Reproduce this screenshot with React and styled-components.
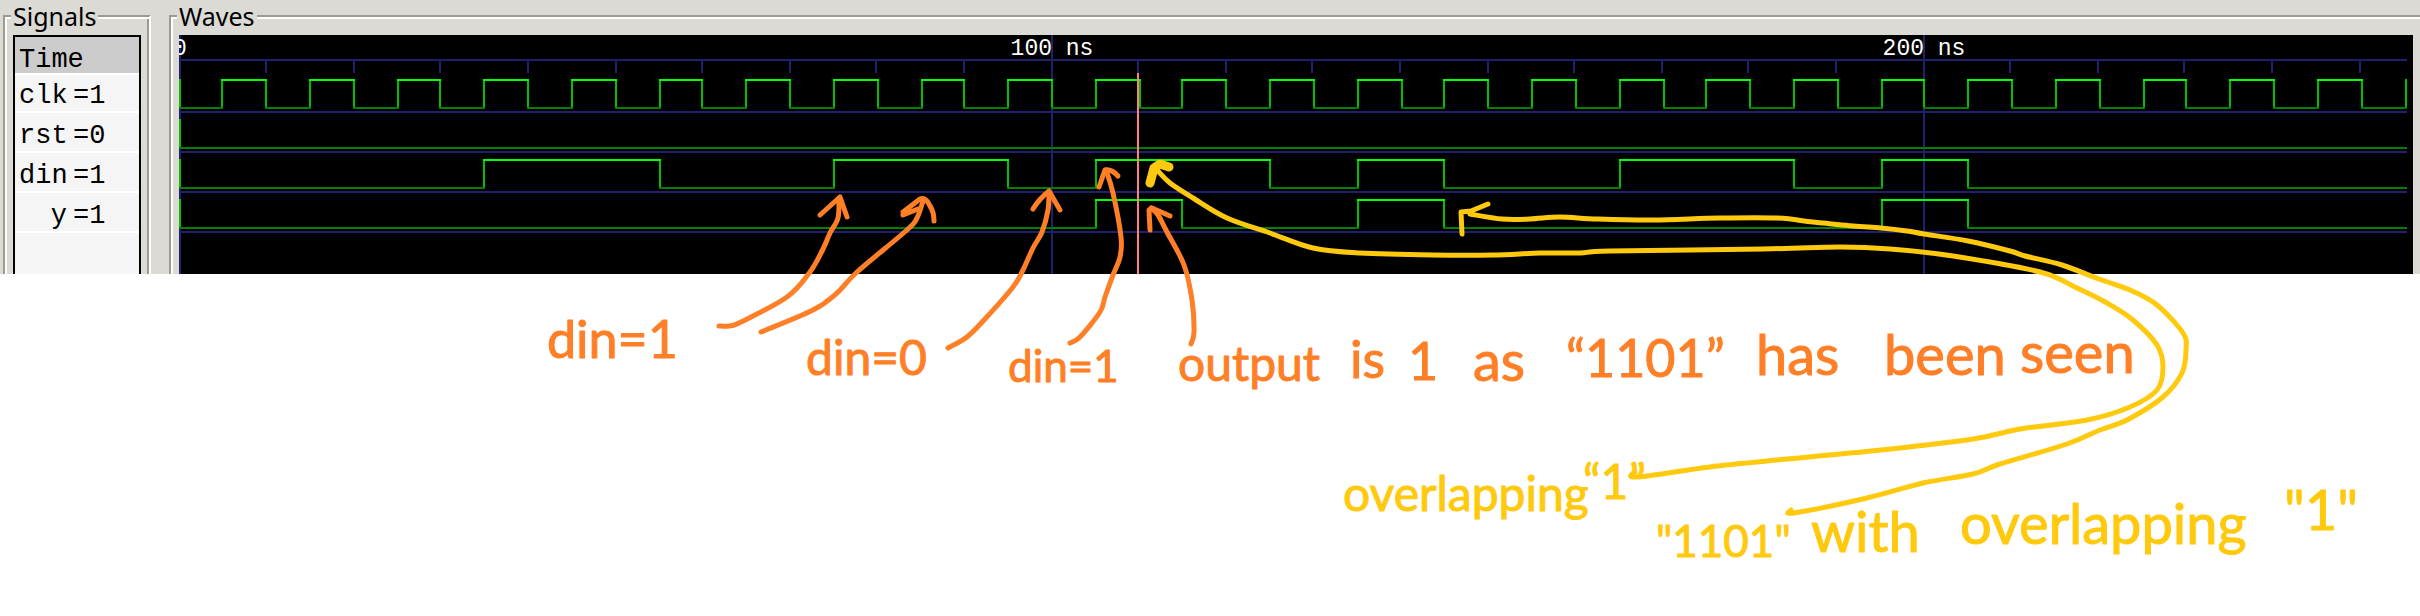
import React from "react";
import styled, { createGlobalStyle } from "styled-components";

const GlobalStyle = createGlobalStyle`
  * { box-sizing: border-box; }
  body { margin: 0; background: #ffffff; }
`;

const Page = styled.main`
  position: relative;
  min-height: 100vh;
  overflow: hidden;
  background: #ffffff;
`;

const Viewer = styled.div`
  display: flex;
  gap: 18px;
  padding-left: 3px;
  background: #dcdad5;
`;

const Group = styled.fieldset`
  flex: ${(p) => (p.$grow ? "1 1 0" : "0 0 auto")};
  min-width: 0;
  margin: 0;
  padding: 3px ${(p) => (p.$grow ? 7 : 8)}px 0 8px;
  border: 0 solid #9e9a91;
  border-top-width: 2px;
  border-left-width: 2px;
  border-right: ${(p) => (p.$grow ? "0" : "2px solid #ffffff")};
  box-shadow: inset 2px 2px 0 #ffffff${(p) => (p.$grow ? "" : ", inset -2px 0 0 #9e9a91")};
`;

const GroupTitle = styled.legend`
  margin-left: -2px;
  padding: 0 2px;
  background: #dcdad5;
  color: #000000;
  font: 25px/32px "Noto Sans", sans-serif;
`;

const SignalList = styled.ul`
  width: 128px;
  height: 239px;
  margin: 0;
  padding: 0;
  list-style: none;
  background: #f5f5f5;
  border: 2px solid #000000;
  border-bottom: 0;
  font: 27px/30px "Liberation Mono", monospace;
`;

const Row = styled.li`
  display: flex;
  align-items: flex-end;
  gap: 6px;
  height: ${(p) => p.$height}px;
  padding-left: 4px;
  border-bottom: 2px solid #ffffff;
`;

const TimeRow = styled(Row)`
  background: #cccccc;
  line-height: 26px;
`;

const SignalName = styled.span`
  width: 48px;
  text-align: right;
`;

const WaveCanvas = styled.div`
  overflow: hidden;
  background: #000000;
`;

const WaveDrawing = styled.svg`
  display: block;
  fill: none;
  stroke-width: 2px;
`;

const AxisLabel = styled.text`
  fill: #ffffff;
  font: 23px "Liberation Mono", monospace;
  text-anchor: middle;
`;

const MarkupLayer = styled.svg`
  position: absolute;
  top: 0;
  left: 0;
  overflow: visible;
  pointer-events: none;
`;

const Stroke = styled.path`
  fill: none;
  stroke: ${(p) => p.$color};
  stroke-width: ${(p) => (p.$heavy ? 9 : 5)}px;
  stroke-linecap: round;
  stroke-linejoin: round;
`;

const Note = styled.text`
  fill: ${(p) => p.$color};
  stroke: ${(p) => p.$color};
  stroke-width: 1px;
  stroke-linejoin: round;
  font-family: Lato, sans-serif;
  font-size: ${(p) => p.$size}px;
`;

const GRID = "#202070";
const ORANGE = "#ff7f27";
const YELLOW = "#ffc90e";

/* Horizontal position of a time in ns, snapped to the two-pixel raster. */
const tickX = (t) => 180 + Math.floor(t * 4.36) * 2;
const edgeX = (t) => 180 + Math.floor(t * 4.3649) * 2;

const END = 255;

const clkPulses = Array.from({ length: 25 }, (_, i) => [5 + i * 10, 10 + i * 10]);

const SIGNALS = [
  { name: "clk", value: 1, height: 38, low: 108, pulses: clkPulses, edgeAtEnd: true },
  { name: "rst", value: 0, height: 40, low: 148, pulses: [] },
  { name: "din", value: 1, height: 40, low: 188, pulses: [[35, 55], [75, 95], [105, 125], [135, 145], [165, 185], [195, 205]] },
  { name: "y", value: 1, height: 40, low: 228, pulses: [[105, 115], [135, 145], [195, 205]] },
];

function Trace({ low, pulses, edgeAtEnd }) {
  const high = low - 28;
  let lows = "";
  let highs = "";
  let edges = `M180 ${high - 1}V${low}`;
  let from = 0;
  pulses.forEach(([a, b]) => {
    lows += `M${edgeX(from) - 1} ${low}H${edgeX(a) + 1}`;
    highs += `M${edgeX(a) - 1} ${high}H${edgeX(b) + 1}`;
    edges += `M${edgeX(a)} ${high}V${low}M${edgeX(b)} ${high}V${low}`;
    from = b;
  });
  lows += `M${edgeX(from) - 1} ${low}H2407`;
  if (edgeAtEnd) edges += `M${edgeX(END)} ${high - 1}V${low}`;
  return (
    <g shapeRendering="crispEdges">
      <path d={edges} stroke="#00c000" />
      <path d={lows} stroke="#008000" />
      <path d={highs} stroke="#00ff00" />
      <path d={`M179 ${low + 4}H2407`} stroke={GRID} />
    </g>
  );
}

function Waves() {
  const ticks = Array.from({ length: 25 }, (_, i) => (i + 1) * 10).filter((t) => t % 100);
  return (
    <WaveDrawing width="2228" height="239" viewBox="179 35 2228 239" role="img" aria-label="Signal waveforms">
      <g stroke={GRID} shapeRendering="crispEdges">
        <path d="M179 60H2407" />
        <path d={ticks.map((t) => `M${tickX(t)} 60V73`).join("")} />
        <path d={[0, 100, 200].map((t) => `M${tickX(t)} 35V274`).join("")} />
      </g>
      <AxisLabel x={tickX(0)} y="55">0</AxisLabel>
      <AxisLabel x={tickX(100)} y="55">100 ns</AxisLabel>
      <AxisLabel x={tickX(200)} y="55">200 ns</AxisLabel>
      {SIGNALS.map((s) => (
        <Trace key={s.name} low={s.low} pulses={s.pulses} edgeAtEnd={s.edgeAtEnd} />
      ))}
      <path d={`M${tickX(110)} 73V274`} stroke="#ff8080" shapeRendering="crispEdges" />
    </WaveDrawing>
  );
}

/* Smooth curve through a list of points. */
function curve(pts) {
  let d = `M${pts[0][0]} ${pts[0][1]}`;
  for (let i = 0; i < pts.length - 1; i++) {
    const p0 = pts[i - 1] || pts[i];
    const p1 = pts[i];
    const p2 = pts[i + 1];
    const p3 = pts[i + 2] || p2;
    d += `C${p1[0] + (p2[0] - p0[0]) / 6} ${p1[1] + (p2[1] - p0[1]) / 6} ${p2[0] - (p3[0] - p1[0]) / 6} ${p2[1] - (p3[1] - p1[1]) / 6} ${p2[0]} ${p2[1]}`;
  }
  return d;
}

const ARROWS = [
  { color: ORANGE, line: [[719, 326], [729, 326], [741, 322], [787, 297], [810, 272], [823, 249], [830, 233], [838, 218], [839, 198]], head: "M820 215L840 197L847 217" },
  { color: ORANGE, line: [[761, 332], [813, 310], [837, 293], [857, 272], [907, 230], [917, 218], [923, 201]], head: "M903 215L918 209M903 212L920 199Q926 197 930 206Q934 212 934 221" },
  { color: ORANGE, line: [[948, 348], [967, 337], [985, 319], [1013, 287], [1023, 270], [1033, 248], [1042, 232], [1048, 210], [1049, 192]], head: "M1033 209Q1039 199 1049 191L1060 210" },
  { color: ORANGE, line: [[1070, 343], [1080, 337], [1100, 312], [1105, 297], [1113, 275], [1120, 257], [1121, 237], [1113, 193], [1106, 170]], head: "M1099 187L1105 170Q1112 169 1118 176" },
  { color: ORANGE, line: [[1191, 344], [1194, 332], [1192, 300], [1184, 265], [1167, 232], [1158, 215], [1151, 208]], head: "M1150 230L1149 210L1152 208L1170 216" },
  {
    color: YELLOW,
    line: [[1157, 170], [1170, 183], [1193, 198], [1227, 218], [1270, 233], [1313, 248], [1360, 253], [1433, 255], [1493, 255], [1540, 253], [1580, 253], [1610, 251], [1763, 249], [1840, 247], [1890, 249], [1953, 256], [2040, 272], [2077, 288], [2107, 303], [2133, 320], [2157, 345], [2163, 367], [2157, 390], [2130, 407], [2087, 420], [2020, 429], [1973, 439], [1871, 451], [1726, 465], [1638, 477], [1635, 472]],
    head: "M1150 183L1154 168L1160 164L1169 167",
    heavy: true,
  },
  {
    color: YELLOW,
    line: [[1470, 214], [1502, 219], [1530, 219], [1560, 217], [1597, 219], [1653, 220], [1720, 218], [1777, 218], [1813, 222], [1853, 226], [1881, 228], [1907, 231], [1924, 234], [1968, 241], [2010, 251], [2025, 256], [2062, 265], [2099, 279], [2130, 290], [2157, 305], [2183, 333], [2186, 350], [2182, 373], [2163, 397], [2127, 420], [2100, 430], [2067, 444], [2000, 464], [1973, 474], [1923, 483], [1867, 498], [1794, 513], [1791, 510]],
    head: "M1488 204L1471 211L1461 212L1462 234",
  },
];

const NOTES = [
  [ORANGE, 52, 547, 358, "din=1"],
  [ORANGE, 48, 806, 375, "din=0"],
  [ORANGE, 44, 1008, 382, "din=1"],
  [ORANGE, 48, 1178, 381, "output"],
  [ORANGE, 52, 1350, 378, "is"],
  [ORANGE, 52, 1408, 380, "1"],
  [ORANGE, 56, 1473, 381, "as"],
  [ORANGE, 52, 1566, 377, "“1101”"],
  [ORANGE, 56, 1756, 375, "has"],
  [ORANGE, 56, 1884, 375, "been"],
  [ORANGE, 56, 2020, 373, "seen"],
  [YELLOW, 48, 1343, 511, "overlapping"],
  [YELLOW, 48, 1583, 499, "“1”"],
  [YELLOW, 44, 1656, 557, '"1101"'],
  [YELLOW, 56, 1811, 552, "with"],
  [YELLOW, 56, 1960, 544, "overlapping"],
  [YELLOW, 56, 2284, 530, '"1"'],
];

export default function App() {
  return (
    <>
      <GlobalStyle />
      <Page>
        <Viewer>
          <Group>
            <GroupTitle>Signals</GroupTitle>
            <SignalList>
              <TimeRow $height={38}>Time</TimeRow>
              {SIGNALS.map((s) => (
                <Row key={s.name} $height={s.height}>
                  <SignalName>{s.name}</SignalName>
                  <span>={s.value}</span>
                </Row>
              ))}
            </SignalList>
          </Group>
          <Group $grow>
            <GroupTitle>Waves</GroupTitle>
            <WaveCanvas>
              <Waves />
            </WaveCanvas>
          </Group>
        </Viewer>
        <MarkupLayer width="2420" height="616">
          {ARROWS.map((a) => (
            <g key={a.head}>
              <Stroke $color={a.color} d={curve(a.line)} />
              <Stroke $color={a.color} $heavy={a.heavy} d={a.head} />
            </g>
          ))}
          {NOTES.map(([color, size, x, y, text]) => (
            <Note key={`${x}-${text}`} $color={color} $size={size} x={x} y={y}>
              {text}
            </Note>
          ))}
        </MarkupLayer>
      </Page>
    </>
  );
}
